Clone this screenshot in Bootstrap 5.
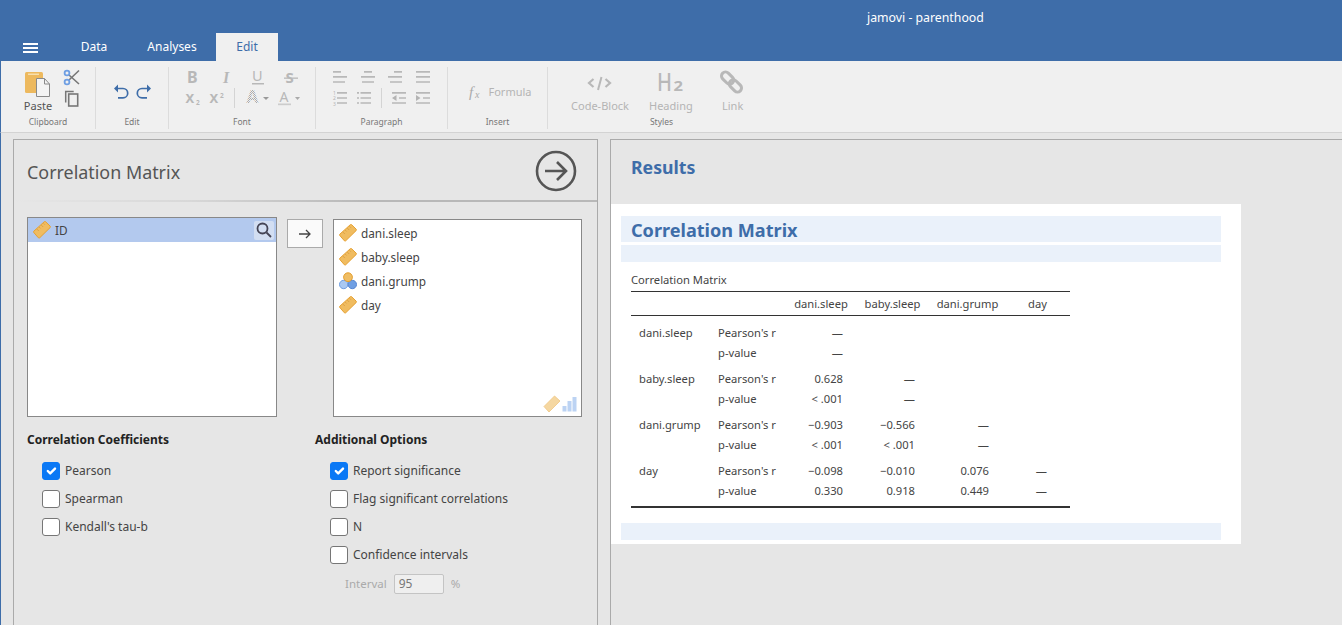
<!doctype html>
<html lang="en"><head><meta charset="utf-8"><title>jamovi - parenthood</title>
<link rel="stylesheet" href="https://cdn.jsdelivr.net/npm/bootstrap@5.3.0/dist/css/bootstrap.min.css">
<style>
html,body{height:100%;overflow:hidden}
body{font-family:"Noto Sans","Open Sans",sans-serif;font-size:12px;background:#e6e6e6;color:#444;line-height:1.2}
.jm-top{height:61px;background:#3e6da9;color:#fff;flex:none}
.jm-title{height:33px;padding:11px 0 0 867px;font-size:12.3px;line-height:14px}
.jm-tabs{height:28px}
.jm-burger{width:15px;margin:10px 0 0 23px;height:10px;border-top:2px solid #fff;border-bottom:2px solid #fff;position:relative}
.jm-burger::after{content:"";position:absolute;left:0;right:0;top:2px;height:2px;background:#fff}
.jm-tab{font-size:12px;line-height:28px;text-align:center}
.jm-tab-on{background:#f0f0f0;color:#3e6da9}
.jm-tools{height:72px;background:#f0f0f0;border-left:1px solid #3e6da9;border-bottom:1px solid #d3d3d3;flex:none}
.jm-grp{position:relative;height:62px;margin-top:6px;border-right:1px solid #dcdcdc;flex:none}
.jm-grp svg{display:block;overflow:visible}
.jm-cap{position:absolute;left:0;right:0;bottom:1px;text-align:center;font-size:8.5px;line-height:12px;color:#777}
.jm-btxt{font-size:11px;line-height:14px;color:#b4b4b4;text-align:center;position:absolute;top:32px;white-space:nowrap}
.jm-main{flex:1;min-height:0;border-left:1px solid #3e6da9;padding-top:6px}
.jm-opts{width:585px;margin-left:12px;border:1px solid #aaa;border-bottom:0;flex:none;padding:0 13px}
.jm-opth{height:62px;margin:0 -13px;padding:0 20px 0 13px;background:linear-gradient(90deg,#e6e6e6,#d8d8d8 30%,#b8b8b8 60%);background-size:100% 2px;background-repeat:no-repeat;background-position:bottom}
.jm-opth h1{font-size:17.9px;font-weight:400;color:#555;margin:0;padding-top:22px}
.jm-lists{margin-top:15px;height:200px}
.jm-box{background:#fff;border:1px solid #888;flex:none}
.jm-box1{width:250px;height:200px}
.jm-box2{width:249px;height:198px;margin:2px 0 0 10px;padding-top:1px;position:relative}
.jm-item{height:24px;padding-left:5px;gap:4px;font-size:11.8px;color:#444}
.jm-sel{background:#b3c9ee}
.jm-mag{width:20px;height:19px;margin-right:2px;background:#d2def2;border-radius:2px}
.jm-move{width:36px;height:29px;margin:2px 0 0 10px;background:#fafafa;border:1px solid #aaa;color:#444;padding:0;border-radius:0;flex:none}
.jm-hint{position:absolute;right:4px;bottom:3px}
.jm-cols{margin-top:15px}
.jm-col1{width:288px;flex:none}
.jm-lab{font-weight:700;font-size:12px;line-height:16px;color:#222;margin-bottom:9px}
.jm-chk{height:28px;padding-left:15px;gap:5px;font-size:12px;color:#444}
.jm-chk .form-check-input{width:18px;height:18px;margin:0;background-color:#fff;border:1px solid #767676;border-radius:3px;flex:none}
.jm-chk .form-check-input:checked{background-color:#0a78f5;border-color:#0a78f5}
.jm-intv{padding-left:30px;gap:7px;height:24px;margin-top:3px;color:#aaa;font-size:11.5px}
.jm-intv span.jm-val{width:50px;height:20px;border:1px solid #c4c4c4;background:#efefef;border-radius:2px;padding-left:4px;color:#777;line-height:18px;font-size:12px}
.jm-res{flex:1;margin-left:12px;border-left:1px solid #aaa;border-top:1px solid #aaa}
.jm-res h2{font-size:17.7px;font-weight:700;color:#3e6da9;margin:0;padding:17px 0 0 20px;height:64px}
.jm-sheet{width:630px;height:340px;background:#fff;padding:12px 20px 0 10px}
.jm-bar{background:#eaf1fa}
.jm-bar h3{font-size:18.1px;font-weight:700;color:#3e6da9;margin:0;line-height:26px;height:26px;padding:1px 0 0 10px}
.jm-tcap{padding:9px 0 0 10px;font-size:11.2px;line-height:18px;color:#444;height:29px}
table.jm-t{margin-left:10px;width:439px;table-layout:fixed;border-collapse:collapse;font-size:11.2px;color:#444;border-top:1px solid #333;border-bottom:2px solid #333}
.jm-t th{font-weight:400;text-align:center;height:24px;padding:0;border-bottom:1px solid #333}
.jm-t td{height:20px;padding:0 0 2px;white-space:nowrap}
.jm-t td.n1{padding-left:8px}
.jm-t td.n2{padding-left:8px}
.jm-t td.v{text-align:right}
.jm-t td.c3{padding-right:12px}.jm-t td.c4{padding-right:15px}.jm-t td.c5{padding-right:16px}.jm-t td.c6{padding-right:23px}
.jm-t tr.first td{height:26px;padding-top:5px;padding-bottom:1px}
.jm-t tr.top td{height:28px;padding-top:7px;padding-bottom:1px}
.jm-t tr.last td{height:25px;padding-bottom:5px;padding-top:0}
</style></head>
<body class="d-flex flex-column">
<svg width="0" height="0" class="position-absolute"><defs>
<symbol id="ruler" viewBox="0 0 18 18"><path d="M.8 10.200 11.300.7a1 1 0 0 1 1.300 0l4.600 4.500a1 1 0 0 1 0 1.300L6.700 16.800a1 1 0 0 1-1.300 0L.8 11.500a1 1 0 0 1 0-1.300Z" fill="#f0bc60" stroke="#e6a030"/><path d="M4 8.200l1.700 1.700M6.300 6.200l1.200 1.200M8.400 4.200l1.700 1.700M10.600 2.400l1.200 1.200" stroke="#d2953a" stroke-width=".8" fill="none"/></symbol>
<symbol id="nominal" viewBox="0 0 18 18"><circle cx="4.700" cy="12.500" r="4.200" fill="#a9c8f2" stroke="#6e9de0"/><circle cx="13.300" cy="12.500" r="4.200" fill="#6f9fe3" stroke="#5685d0"/><circle cx="9" cy="5.200" r="4.400" fill="#efbd63" stroke="#e59f2f"/></symbol>
<pattern id="hatch" width="2" height="2" patternUnits="userSpaceOnUse"><rect width="2" height="2" fill="#eee"/><rect width="1" height="1" fill="#aaa"/><rect x="1" y="1" width="1" height="1" fill="#aaa"/></pattern>
</defs></svg>

<header class="jm-top">
  <div class="jm-title">jamovi - parenthood</div>
  <nav class="jm-tabs d-flex">
    <div class="jm-burger"></div>
    <div class="jm-tab" style="width:62px;margin-left:25px">Data</div>
    <div class="jm-tab" style="width:66px;margin-left:14px">Analyses</div>
    <div class="jm-tab jm-tab-on" style="width:62px;margin-left:11px">Edit</div>
  </nav>
</header>

<div class="jm-tools d-flex">
  <div class="jm-grp" style="width:95px">
    <svg width="95" height="50" viewBox="0 67 95 50">
      <rect x="24" y="72" width="18" height="21" rx="1.500" fill="#edb95e"/><rect x="27" y="73.500" width="11" height="1.500" fill="#f7dfae"/>
      <path d="M35.500 78.500h8l5 5.500v12.500h-13Z" fill="#f4f4f4" stroke="#8a8a8a"/><path d="M43.500 78.500v5.500h5" fill="none" stroke="#8a8a8a"/>
      <g fill="none"><path d="M68 75 78 84M78 70.500 68 80" stroke="#777" stroke-width="1.600"/><circle cx="66" cy="73" r="2.400" stroke="#6f9fe3" stroke-width="1.800"/><circle cx="66" cy="82" r="2.400" stroke="#6f9fe3" stroke-width="1.800"/></g>
      <path d="M64.700 102.500V91.500h8" fill="none" stroke="#777" stroke-width="1.500"/><rect x="67.700" y="94" width="9" height="12" fill="#f0f0f0" stroke="#777" stroke-width="1.600"/>
    </svg>
    <div class="jm-btxt" style="left:22px;width:30px;color:#555">Paste</div>
    <div class="jm-cap">Clipboard</div>
  </div>
  <div class="jm-grp" style="width:73px">
    <svg width="73" height="50" viewBox="96 67 73 50" fill="none" stroke="#3e6da9" stroke-width="1.700">
      <path d="M116 88.500h7a4.700 4.700 0 0 1 0 9.400h-5"/><path d="M118 84.500l-4 4 4 4Z" fill="#3e6da9" stroke="none"/>
      <path d="M149 88.500h-7a4.700 4.700 0 0 0 0 9.400h5"/><path d="M147 84.500l4 4-4 4Z" fill="#3e6da9" stroke="none"/>
    </svg>
    <div class="jm-cap">Edit</div>
  </div>
  <div class="jm-grp" style="width:147px">
    <svg width="147" height="50" viewBox="169 67 147 50" fill="#b8b8b8" font-family="Noto Sans,sans-serif">
      <text x="187" y="83" font-size="16" font-weight="700">B</text>
      <text x="223" y="83" font-size="16" font-weight="700" font-style="italic" font-family="Liberation Serif,serif">I</text>
      <text x="252" y="81" font-size="14.500">U</text><rect x="252" y="83" width="12" height="1.500"/>
      <text x="285.500" y="83" font-size="15" font-weight="700">S</text><rect x="284" y="77.500" width="14" height="1.300"/>
      <text x="185.500" y="103" font-size="13" font-weight="700">X</text><text x="196" y="105" font-size="6.500" font-weight="700">2</text>
      <text x="209.500" y="103" font-size="13" font-weight="700">X</text><text x="220" y="98" font-size="6.500" font-weight="700">2</text>
      <rect x="234" y="88" width="1" height="20" fill="#d4d4d4"/>
      <text x="246.500" y="103" font-size="17" font-weight="700" fill="url(#hatch)">A</text><path d="M263 97h6l-3 3Z" fill="#999"/>
      <text x="279.500" y="102" font-size="14" font-weight="400">A</text><rect x="278" y="103.500" width="13" height="1.700" fill="#ccc"/><path d="M295 97h5l-2.500 3Z" fill="#aaa"/>
    </svg>
    <div class="jm-cap">Font</div>
  </div>
  <div class="jm-grp" style="width:132px">
    <svg width="132" height="50" viewBox="316 67 132 50" fill="none" stroke="#b8b8b8" stroke-width="1.700">
      <path d="M333 71.800h8M333 76.800h14M333 82h12"/>
      <path d="M364 71.800h8M361 76.800h14M362 82h12"/>
      <path d="M394 71.800h8M388 76.800h14M390 82h12"/>
      <path d="M416 71.800h14M416 76.800h14M416 82h14"/>
      <path d="M337 92.800h10M337 98h10M337 103h10M357 92.800h2M360.500 92.800h10.500M357 98h2M360.500 98h10.500M357 103h2M360.500 103h10.500"/>
      <g stroke="none" fill="#b4b4b4" font-size="5" font-family="Noto Sans,sans-serif"><text x="333" y="95">1</text><text x="333" y="100">2</text><text x="333" y="105.500">3</text></g>
      <path d="M381.500 88v20" stroke="#d4d4d4" stroke-width="1"/>
      <path d="M392 92.800h14M399 98h7M392 103h14M416 92.800h14M423 98h7M416 103h14"/>
      <path d="M396.500 95v6l-4.500-3ZM416 95v6l4.500-3Z" fill="#b4b4b4" stroke="none"/>
    </svg>
    <div class="jm-cap">Paragraph</div>
  </div>
  <div class="jm-grp" style="width:100px">
    <svg width="100" height="50" viewBox="448 67 100 50" fill="#aaa"><text x="469" y="97" font-family="Liberation Serif,serif" font-style="italic" font-size="15">f</text><text x="475" y="98" font-family="Liberation Serif,serif" font-style="italic" font-size="10">x</text></svg>
    <div class="jm-btxt" style="left:40px;width:44px;top:18px">Formula</div>
    <div class="jm-cap">Insert</div>
  </div>
  <div class="jm-grp" style="border:0;width:215px">
    <svg width="215" height="50" viewBox="548 67 215 50" fill="none" stroke="#b8b8b8">
      <path d="M593.500 79l-4.500 4 4.500 4M605.500 79l4.500 4-4.500 4" stroke-width="2.200"/><path d="M601.500 77l-3.500 13" stroke-width="2"/>
      <text x="657" y="91" font-size="25" font-weight="500" fill="#b8b8b8" stroke="none" font-family="Noto Sans,sans-serif" textLength="15" lengthAdjust="spacingAndGlyphs">H</text><text x="673.500" y="91" font-size="14" font-weight="700" fill="#b8b8b8" stroke="none" font-family="Noto Sans,sans-serif" textLength="9.500" lengthAdjust="spacingAndGlyphs">2</text>
      <g stroke-width="3" transform="rotate(45 731.500 82)"><rect x="719" y="78" width="14" height="8" rx="4"/><rect x="730" y="78" width="14" height="8" rx="4"/></g>
    </svg>
    <div class="jm-btxt" style="left:22px;width:60px">Code-Block</div>
    <div class="jm-btxt" style="left:101px;width:43px">Heading</div>
    <div class="jm-btxt" style="left:174px;width:20px">Link</div>
    <div class="jm-cap" style="width:227px">Styles</div>
  </div>
</div>

<main class="jm-main d-flex">
  <section class="jm-opts">
    <div class="jm-opth d-flex justify-content-between">
      <h1>Correlation Matrix</h1>
      <svg width="42" height="42" viewBox="0 0 42 42" style="margin-top:10px" fill="none" stroke="#555" stroke-width="2.600"><circle cx="21" cy="21" r="19"/><path d="M10 21h21M22 12l9 9-9 9"/></svg>
    </div>
    <div class="jm-lists d-flex">
      <div class="jm-box jm-box1">
        <div class="jm-item jm-sel d-flex align-items-center"><svg width="18" height="18"><use href="#ruler"/></svg><span class="flex-fill">ID</span>
          <span class="jm-mag d-flex align-items-center justify-content-center"><svg width="16" height="16" viewBox="0 0 16 16" fill="none" stroke="#445" stroke-width="1.800"><circle cx="6.500" cy="6.500" r="5"/><path d="M10.500 10.500 15 15"/></svg></span></div>
      </div>
      <button class="btn jm-move" type="button" aria-label="Move"><svg width="12" height="10" viewBox="0 0 12 10" fill="none" stroke="#444" stroke-width="1.300" class="d-block mx-auto"><path d="M0 5h11M7 1l4 4-4 4"/></svg></button>
      <div class="jm-box jm-box2">
        <div class="jm-item d-flex align-items-center"><svg width="18" height="18"><use href="#ruler"/></svg><span>dani.sleep</span></div>
        <div class="jm-item d-flex align-items-center"><svg width="18" height="18"><use href="#ruler"/></svg><span>baby.sleep</span></div>
        <div class="jm-item d-flex align-items-center"><svg width="18" height="18"><use href="#nominal"/></svg><span>dani.grump</span></div>
        <div class="jm-item d-flex align-items-center"><svg width="18" height="18"><use href="#ruler"/></svg><span>day</span></div>
        <svg class="jm-hint" width="34" height="18" viewBox="0 0 34 18"><g opacity=".6"><path d="M1 11.500 11.500 1l5.500 5L6 17Z" fill="#efbd63" stroke="#e59f2f" stroke-width=".8"/></g><path d="M19.500 11h4v5.500h-4ZM24.500 6h4v10.500h-4ZM29.500 2h4v14.500h-4Z" fill="#bcd3f3"/></svg>
      </div>
    </div>
    <div class="jm-cols d-flex">
      <div class="jm-col1">
        <div class="jm-lab">Correlation Coefficients</div>
        <label class="jm-chk d-flex align-items-center"><input class="form-check-input" type="checkbox" checked>Pearson</label>
        <label class="jm-chk d-flex align-items-center"><input class="form-check-input" type="checkbox">Spearman</label>
        <label class="jm-chk d-flex align-items-center"><input class="form-check-input" type="checkbox">Kendall's tau-b</label>
      </div>
      <div>
        <div class="jm-lab">Additional Options</div>
        <label class="jm-chk d-flex align-items-center"><input class="form-check-input" type="checkbox" checked>Report significance</label>
        <label class="jm-chk d-flex align-items-center"><input class="form-check-input" type="checkbox">Flag significant correlations</label>
        <label class="jm-chk d-flex align-items-center"><input class="form-check-input" type="checkbox">N</label>
        <label class="jm-chk d-flex align-items-center"><input class="form-check-input" type="checkbox">Confidence intervals</label>
        <div class="jm-intv d-flex align-items-center"><span>Interval</span><span class="jm-val">95</span><span>%</span></div>
      </div>
    </div>
  </section>
  <section class="jm-res">
    <h2>Results</h2>
    <div class="jm-sheet">
      <div class="jm-bar"><h3>Correlation Matrix</h3></div>
      <div class="jm-bar" style="height:17px;margin-top:3px"></div>
      <div class="jm-tcap">Correlation Matrix</div>
      <table class="jm-t">
        <colgroup><col style="width:79px"><col style="width:77px"><col style="width:68px"><col style="width:75px"><col style="width:75px"><col style="width:65px"></colgroup>
        <thead><tr><th></th><th></th><th>dani.sleep</th><th>baby.sleep</th><th>dani.grump</th><th>day</th></tr></thead>
        <tbody>
        <tr class="top"><td class="n1">dani.sleep</td><td class="n2">Pearson's r</td><td class="v c3">—</td><td></td><td></td><td></td></tr>
        <tr><td></td><td class="n2">p-value</td><td class="v c3">—</td><td></td><td></td><td></td></tr>
        <tr class="first"><td class="n1">baby.sleep</td><td class="n2">Pearson's r</td><td class="v c3">0.628</td><td class="v c4">—</td><td></td><td></td></tr>
        <tr><td></td><td class="n2">p-value</td><td class="v c3">&lt; .001</td><td class="v c4">—</td><td></td><td></td></tr>
        <tr class="first"><td class="n1">dani.grump</td><td class="n2">Pearson's r</td><td class="v c3">−0.903</td><td class="v c4">−0.566</td><td class="v c5">—</td><td></td></tr>
        <tr><td></td><td class="n2">p-value</td><td class="v c3">&lt; .001</td><td class="v c4">&lt; .001</td><td class="v c5">—</td><td></td></tr>
        <tr class="first"><td class="n1">day</td><td class="n2">Pearson's r</td><td class="v c3">−0.098</td><td class="v c4">−0.010</td><td class="v c5">0.076</td><td class="v c6">—</td></tr>
        <tr class="last"><td></td><td class="n2">p-value</td><td class="v c3">0.330</td><td class="v c4">0.918</td><td class="v c5">0.449</td><td class="v c6">—</td></tr>
        </tbody>
      </table>
      <div class="jm-bar" style="height:17px;margin-top:15px"></div>
    </div>
  </section>
</main>
<script src="https://cdn.jsdelivr.net/npm/bootstrap@5.3.0/dist/js/bootstrap.bundle.min.js"></script>
</body></html>
